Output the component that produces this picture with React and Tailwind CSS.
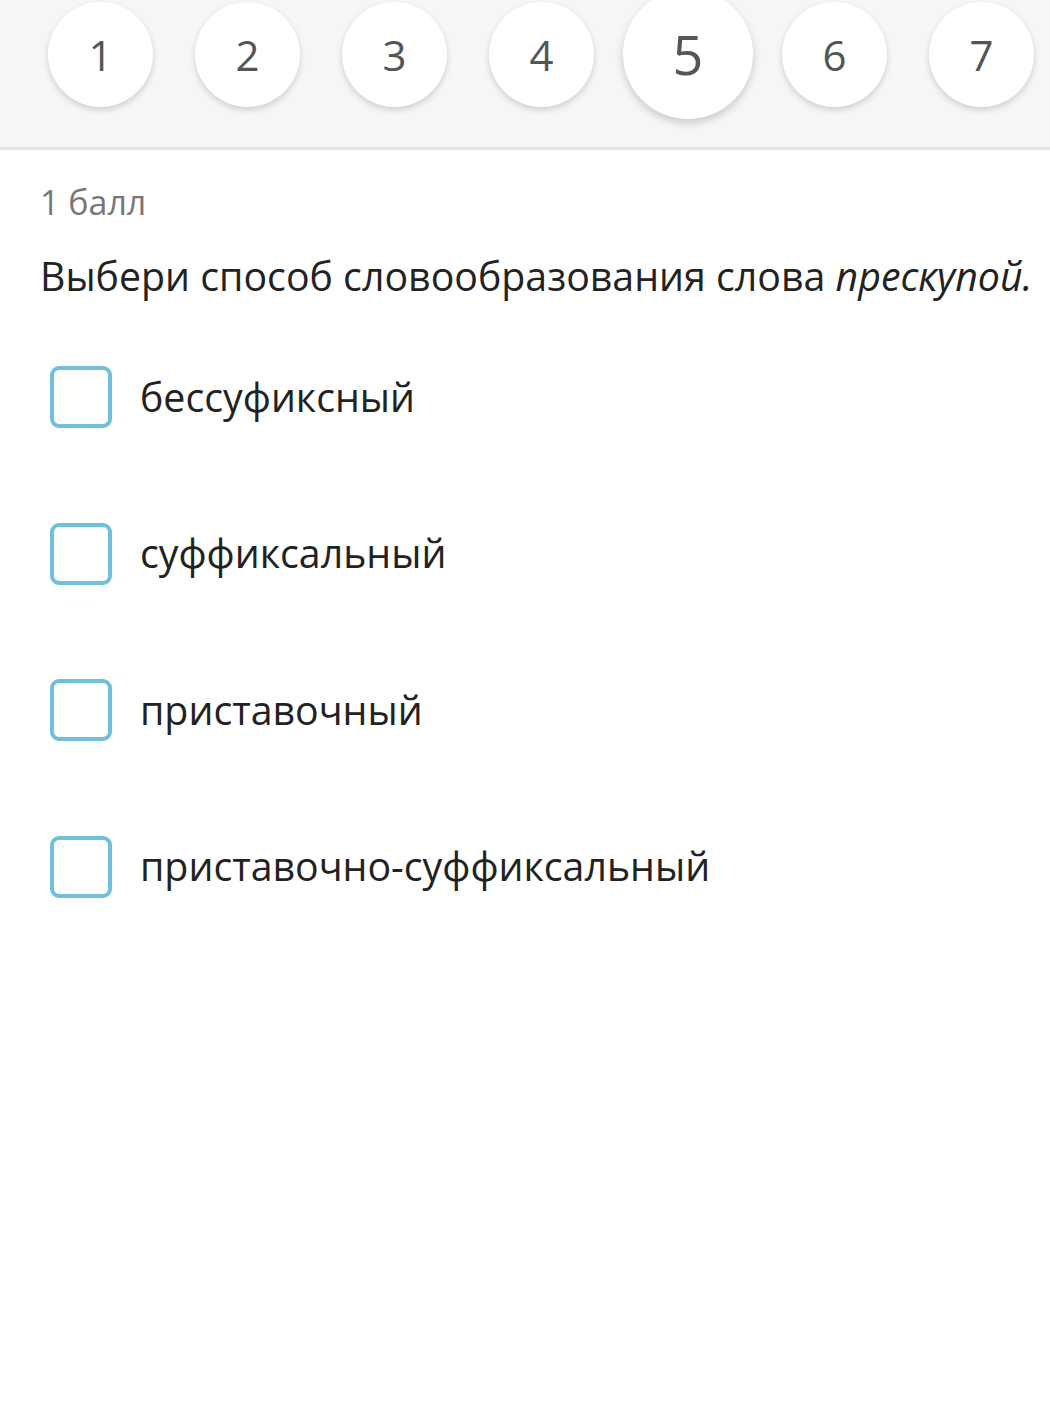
import React from "react";

const nums = [1, 2, 3, 4, 5, 6, 7];
const options = ["бессуфиксный", "суффиксальный", "приставочный", "приставочно-суффиксальный"];

export default function App() {
  return (
    <div className="w-[1050px] h-[1419px] bg-white overflow-hidden" style={{ fontFamily: '"Open Sans", sans-serif' }}>
      <div className="h-[150px] bg-[#f4f6f8] border-b-[3px] border-[#e2e4e6] flex items-start">
        <div className="flex items-center pl-[48px] gap-[42px] h-[108px]">
          {nums.map((n) =>
            n === 5 ? (
              <div key={n} className="w-[130px] h-[130px] shrink-0 -mx-[13px] rounded-full bg-white shadow-[0_4px_8px_rgba(0,0,0,0.18)] flex items-center justify-center text-[54px] text-[#555]">
                {n}
              </div>
            ) : (
              <div key={n} className="w-[105px] h-[105px] shrink-0 rounded-full bg-white shadow-[0_3px_6px_rgba(0,0,0,0.16)] flex items-center justify-center text-[42px] text-[#555]">
                {n}
              </div>
            )
          )}
        </div>
      </div>
      <div className="pl-[40px] pt-[29px]">
        <div className="text-[34px] text-[#777] leading-[46px]">1 балл</div>
        <div className="mt-[26px] text-[39.3px] text-[#222] leading-[50px] whitespace-nowrap">
          Выбери способ словообразования слова <i>прескупой.</i>
        </div>
        <div className="mt-[65px] flex flex-col gap-[94.5px] pl-[10px]">
          {options.map((o) => (
            <div key={o} className="flex items-center gap-[28px] h-[62px]">
              <div className="w-[62px] h-[62px] rounded-[9px] border-[4px] border-[#70bfdc] shrink-0" />
              <span className="text-[39.3px] text-[#222]">{o}</span>
            </div>
          ))}
        </div>
      </div>
    </div>
  );
}
